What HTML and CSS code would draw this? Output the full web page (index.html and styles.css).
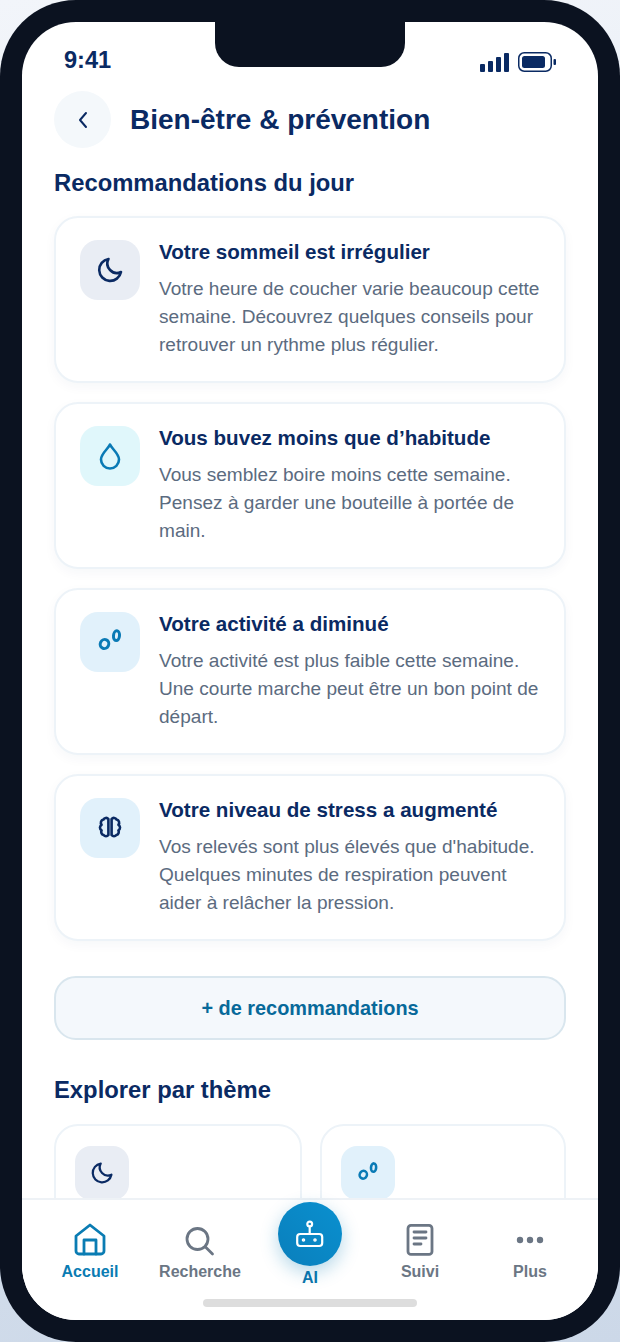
FILE: index.html

```html
<!DOCTYPE html>
<html lang="fr">
<head>
  <meta charset="UTF-8">
  <meta name="viewport" content="width=device-width, initial-scale=1.0">
  <title>Bien-être &amp; prévention</title>
  <link rel="stylesheet" href="styles.css">
</head>
<body>
  <div class="phone">
    <div class="screen">
      <div class="notch"></div>

      <div class="status-bar">
        <span class="time">9:41</span>
        <div class="status-icons">
          <svg width="29" height="20" viewBox="0 0 29 20"><rect x="0" y="12" width="5" height="8" rx="1"/><rect x="8" y="9" width="5" height="11" rx="1"/><rect x="16" y="5" width="5" height="15" rx="1"/><rect x="24" y="1" width="5" height="19" rx="1"/></svg>
          <svg width="38" height="20" viewBox="0 0 38 20"><rect x="0.75" y="0.75" width="32.5" height="18.5" rx="5.5" fill="none" stroke="#0a2a63" stroke-width="1.5"/><rect x="4" y="4" width="23" height="12" rx="2.5"/><rect x="35.5" y="7" width="2.5" height="6" rx="1"/></svg>
        </div>
      </div>

      <header class="top-bar">
        <button class="back-btn">
          <svg width="24" height="24" viewBox="0 0 24 24" fill="none" stroke="#0a2a63" stroke-width="2" stroke-linecap="round" stroke-linejoin="round"><path d="M15 5 L9 12 L15 19"/></svg>
        </button>
        <h1>Bien-être &amp; prévention</h1>
      </header>

      <main class="content">
        <h2 class="section-title">Recommandations du jour</h2>

        <div class="card">
          <div class="card-icon icon-grey">
            <svg class="icon-28" viewBox="0 0 28 28" fill="none" stroke="#0a2a63" stroke-width="2.6" stroke-linecap="round" stroke-linejoin="round"><path d="M12.5 3 A11 11 0 1 0 25 16 A9.5 9.5 0 0 1 12.5 3 Z"/></svg>
          </div>
          <div class="card-text">
            <h3>Votre sommeil est irrégulier</h3>
            <p>Votre heure de coucher varie beaucoup cette semaine. Découvrez quelques conseils pour retrouver un rythme plus régulier.</p>
          </div>
        </div>

        <div class="card">
          <div class="card-icon icon-cyan">
            <svg class="icon-28" viewBox="0 0 28 28" fill="none" stroke="#0a7ab5" stroke-width="2.6" stroke-linecap="round" stroke-linejoin="round"><path d="M14 2.5 C12.5 6.5 5 11.5 5 17.5 A9 9 0 0 0 23 17.5 C23 11.5 15.5 6.5 14 2.5 Z"/></svg>
          </div>
          <div class="card-text">
            <h3>Vous buvez moins que d’habitude</h3>
            <p>Vous semblez boire moins cette semaine. Pensez à garder une bouteille à portée de main.</p>
          </div>
        </div>

        <div class="card">
          <div class="card-icon icon-blue">
            <svg class="icon-28" viewBox="0 0 28 28" fill="none" stroke="#0a7ab5" stroke-width="3"><ellipse cx="20.5" cy="7.7" rx="3" ry="4.9" transform="rotate(5 20.5 7.7)"/><ellipse cx="8.5" cy="16" rx="4.2" ry="4.6" transform="rotate(25 8.5 16)"/></svg>
          </div>
          <div class="card-text">
            <h3>Votre activité a diminué</h3>
            <p>Votre activité est plus faible cette semaine. Une courte marche peut être un bon point de départ.</p>
          </div>
        </div>

        <div class="card">
          <div class="card-icon icon-blue">
            <svg class="icon-28" viewBox="0 0 28 28" fill="none" stroke="#0a2a63" stroke-width="2.6" stroke-linecap="round" stroke-linejoin="round"><path d="M12.4 5 A3 3 0 0 0 7.4 5.6 A3.2 3.2 0 0 0 5.6 10.8 A3.2 3.2 0 0 0 5.6 16.4 A3.2 3.2 0 0 0 7.6 21 A3 3 0 0 0 12.4 21 Z"/><path d="M15.6 5 A3 3 0 0 1 20.6 5.6 A3.2 3.2 0 0 1 22.4 10.8 A3.2 3.2 0 0 1 22.4 16.4 A3.2 3.2 0 0 1 20.4 21 A3 3 0 0 1 15.6 21 Z"/></svg>
          </div>
          <div class="card-text">
            <h3>Votre niveau de stress a augmenté</h3>
            <p>Vos relevés sont plus élevés que d'habitude. Quelques minutes de respiration peuvent aider à relâcher la pression.</p>
          </div>
        </div>

        <button class="more-btn">+ de recommandations</button>

        <h2 class="section-title theme-title">Explorer par thème</h2>

        <div class="theme-grid">
          <div class="theme-card">
            <div class="theme-icon icon-grey">
              <svg class="icon-24" viewBox="0 0 28 28" fill="none" stroke="#0a2a63" stroke-width="2.6" stroke-linecap="round" stroke-linejoin="round"><path d="M12.5 3 A11 11 0 1 0 25 16 A9.5 9.5 0 0 1 12.5 3 Z"/></svg>
            </div>
          </div>
          <div class="theme-card">
            <div class="theme-icon icon-blue">
              <svg class="icon-24" viewBox="0 0 28 28" fill="none" stroke="#0a7ab5" stroke-width="3"><ellipse cx="20.5" cy="7.7" rx="3" ry="4.9" transform="rotate(5 20.5 7.7)"/><ellipse cx="8.5" cy="16" rx="4.2" ry="4.6" transform="rotate(25 8.5 16)"/></svg>
            </div>
          </div>
        </div>
      </main>

      <nav class="tab-bar">
        <a class="tab active">
          <svg width="32" height="34" viewBox="0 0 32 34" fill="none" stroke="#0a7cb3" stroke-width="2.8" stroke-linecap="round" stroke-linejoin="round"><path d="M16 2 L30 13 V28 A3 3 0 0 1 27 31 H5 A3 3 0 0 1 2 28 V13 Z"/><path d="M10 31 V17 H22 V31"/></svg>
          <span>Accueil</span>
        </a>
        <a class="tab">
          <svg width="32" height="34" viewBox="0 0 32 34" fill="none" stroke="#6b7684" stroke-width="2.8" stroke-linecap="round"><circle cx="13.5" cy="16" r="10.5"/><path d="M21.5 24 L28.5 31"/></svg>
          <span>Recherche</span>
        </a>
        <a class="tab tab-ai">
          <div class="ai-btn">
            <svg width="30" height="30" viewBox="0 0 30 30" fill="none" stroke="#fff" stroke-width="2.2" stroke-linecap="round" stroke-linejoin="round"><circle cx="14.7" cy="5" r="2.4"/><path d="M14.7 7.5 V15"/><rect x="2.2" y="15" width="25" height="12" rx="3"/><circle cx="8.5" cy="21" r="0.7" fill="#fff"/><circle cx="20" cy="21" r="0.7" fill="#fff"/></svg>
          </div>
          <span>AI</span>
        </a>
        <a class="tab">
          <svg width="32" height="34" viewBox="0 0 32 34" fill="none" stroke="#6b7684" stroke-width="2.8" stroke-linecap="round" stroke-linejoin="round"><rect x="4" y="2.4" width="24" height="29" rx="3"/><path d="M10 9 H22 M10 15 H22 M10 21 H17"/></svg>
          <span>Suivi</span>
        </a>
        <a class="tab">
          <svg width="32" height="34" viewBox="0 0 32 34" fill="#6b7684"><circle cx="6" cy="17" r="3.2"/><circle cx="16" cy="17" r="3.2"/><circle cx="26" cy="17" r="3.2"/></svg>
          <span>Plus</span>
        </a>
        <div class="home-indicator"></div>
      </nav>
    </div>
  </div>
</body>
</html>
```

FILE: styles.css

```css
* {
  box-sizing: border-box;
}
html, body {
  height: 100%;
}
body {
  margin: 0;
  font-family: "Liberation Sans", Arial, sans-serif;
  background: linear-gradient(170deg, #f2f5fa, #ccd8e8);
  color: #0a2a63;
}
.phone {
  width: 620px;
  height: 1342px;
  padding: 22px;
  background: #0b1220;
  border-radius: 76px;
}
.screen {
  position: relative;
  display: flex;
  flex-direction: column;
  height: 100%;
  background: #fff;
  border-radius: 54px;
  overflow: hidden;
}
.notch {
  position: absolute;
  top: 0;
  left: 193px;
  width: 190px;
  height: 45px;
  background: #0b1220;
  border-radius: 0 0 24px 24px;
}
.status-bar {
  display: flex;
  justify-content: space-between;
  align-items: center;
  height: 50px;
  padding: 26px 42px 0 42px;
  flex-shrink: 0;
}
.time {
  font-size: 23.6px;
  font-weight: 700;
}
.status-icons {
  display: flex;
  align-items: center;
  gap: 9px;
  margin-top: 4px;
  fill: #0a2a63;
}
.top-bar {
  display: flex;
  align-items: center;
  gap: 19px;
  padding: 19px 32px 0;
  flex-shrink: 0;
}
.back-btn {
  display: flex;
  align-items: center;
  justify-content: center;
  width: 57px;
  height: 57px;
  padding: 0;
  border: none;
  border-radius: 50%;
  background: #f4f8fb;
}
.top-bar h1 {
  margin: 0;
  font-size: 28px;
  font-weight: 700;
}
.content {
  flex: 1;
  min-height: 0;
  overflow: hidden;
  padding: 0 32px;
}
.section-title {
  margin: 21px 0 19px;
  font-size: 23.8px;
  line-height: 28px;
  font-weight: 700;
}
.card {
  display: flex;
  gap: 19px;
  height: 167px;
  margin-bottom: 19px;
  padding: 22px 20px 22px 24px;
  background: #fff;
  border: 2px solid #edf3f8;
  border-radius: 24px;
  box-shadow: 0 4px 12px rgba(15, 50, 90, 0.04);
}
.card-icon {
  display: flex;
  align-items: center;
  justify-content: center;
  flex-shrink: 0;
  width: 60px;
  height: 60px;
  border-radius: 18px;
}
.icon-grey {
  background: #e9edf4;
}
.icon-cyan {
  background: #e0f7fb;
}
.icon-blue {
  background: #e1f1fb;
}
.icon-28 {
  width: 28px;
  height: 28px;
}
.icon-24 {
  width: 24px;
  height: 24px;
}
.card-text {
  margin-top: -1px;
}
.card-text h3 {
  margin: 0 0 10px;
  font-size: 20.6px;
  line-height: 26px;
  font-weight: 700;
}
.card-text p {
  margin: 0;
  font-size: 19.07px;
  line-height: 28px;
  color: #5b6b80;
}
.more-btn {
  display: block;
  width: 100%;
  height: 64px;
  margin-top: 35px;
  background: #f4f8fc;
  border: 2px solid #d9e6ee;
  border-radius: 22px;
  font-family: inherit;
  font-size: 19.9px;
  font-weight: 700;
  color: #07699a;
}
.theme-title {
  margin: 36px 0 20px;
}
.theme-grid {
  display: grid;
  grid-template-columns: 248px 246px;
  gap: 18px;
}
.theme-card {
  height: 130px;
  padding: 20px 19px;
  background: #fff;
  border: 2px solid #edf3f8;
  border-radius: 24px;
}
.theme-icon {
  display: flex;
  align-items: center;
  justify-content: center;
  width: 54px;
  height: 54px;
  border-radius: 16px;
}
.tab-bar {
  position: relative;
  display: flex;
  flex-shrink: 0;
  height: 122px;
  padding: 23px 13px 0;
  background: #fff;
  border-top: 2px solid #eef2f6;
}
.tab {
  flex: 1;
  display: flex;
  flex-direction: column;
  align-items: center;
  gap: 6px;
  font-size: 16px;
  line-height: 18px;
  font-weight: 700;
  color: #6b7684;
}
.tab.active {
  color: #0a7cb3;
}
.tab-ai {
  color: #0a74ab;
}
.tab-ai span {
  margin-top: 46px;
}
.ai-btn {
  position: absolute;
  top: 2px;
  left: 256px;
  display: flex;
  align-items: center;
  justify-content: center;
  width: 64px;
  height: 64px;
  border-radius: 50%;
  background: linear-gradient(45deg, #0a7fbc, #0a90cf);
  box-shadow: 0 6px 18px rgba(10, 124, 179, 0.3);
}
.home-indicator {
  position: absolute;
  left: 181px;
  bottom: 13px;
  width: 214px;
  height: 8px;
  border-radius: 4px;
  background: #dddddd;
}
```
